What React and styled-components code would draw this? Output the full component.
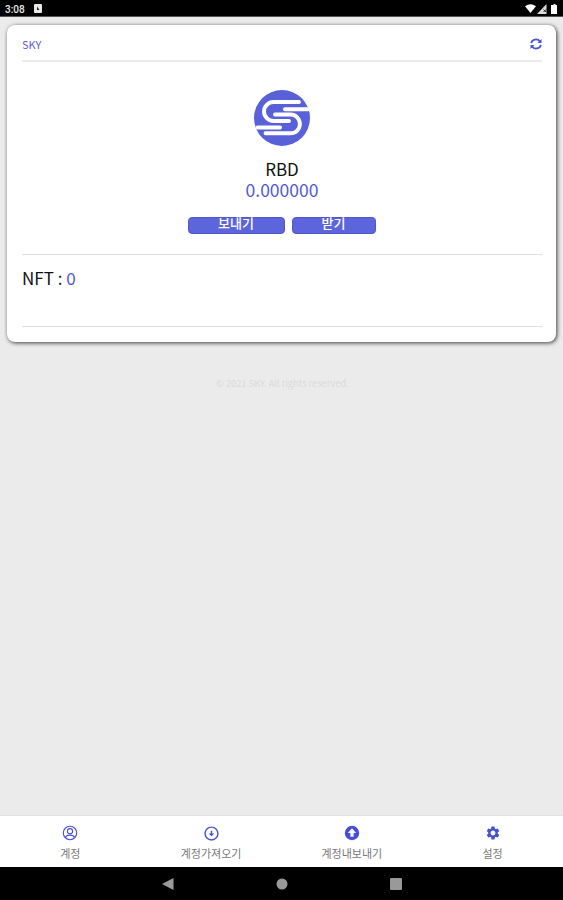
import React from 'react';
import styled, { createGlobalStyle } from 'styled-components';
import { MdOutlineArrowCircleDown, MdSettings } from 'react-icons/md';

const GlobalStyle = createGlobalStyle`
  * {
    box-sizing: border-box;
  }
  body {
    margin: 0;
    background: #ebebeb;
    font-family: 'Noto Sans CJK KR', 'Noto Sans', sans-serif;
  }
`;

const Screen = styled.div`
  display: flex;
  flex-direction: column;
  height: 900px;
  overflow: hidden;
`;

const StatusBar = styled.header`
  display: flex;
  align-items: center;
  justify-content: space-between;
  flex: none;
  height: 17px;
  padding: 1px 5px 0;
  background: #000;
  color: #e8e8e8;
  border-bottom: 1px solid #555;
`;

const StatusGroup = styled.div`
  display: flex;
  align-items: center;
  gap: ${props => props.gap}px;
`;

const Clock = styled.span`
  padding-top: 1px;
  font: 500 10px/13px Roboto, sans-serif;
`;

const Content = styled.main`
  flex: 1;
  padding: 8px 7px 0;
`;

const Card = styled.section`
  height: 317px;
  padding: 0 14px 0 15px;
  background: #fff;
  border-radius: 8px;
  box-shadow: 1px 1px 4px rgba(0, 0, 0, 0.75);
`;

const CardHeader = styled.div`
  display: flex;
  align-items: center;
  justify-content: space-between;
  height: 37px;
  padding-top: 3px;
  border-bottom: 2px solid #ececec;
  color: #5a60cf;
  font-size: 11px;
`;

const Wallet = styled.div`
  display: flex;
  flex-direction: column;
  align-items: center;
  height: 193px;
  padding-top: 28px;
  border-bottom: 1px solid #dedede;
`;

const TokenName = styled.div`
  margin-top: 12px;
  color: #111;
  font-size: 17px;
  line-height: 21px;
`;

const Balance = styled.div`
  color: #5059d6;
  font-size: 17.5px;
  line-height: 21px;
`;

const Buttons = styled.div`
  display: flex;
  gap: 7px;
  margin-top: 17px;
  padding-right: 1px;
`;

const Button = styled.button`
  display: flex;
  align-items: center;
  justify-content: center;
  width: ${props => props.width}px;
  height: 17px;
  padding: 0 0 5px;
  border: 1px solid #4f57cb;
  border-radius: 4px;
  background: #5c65dc;
  color: #fff;
  font: 500 13px/12px 'Noto Sans CJK KR', sans-serif;
`;

const Nft = styled.div`
  height: 72px;
  padding-top: 11px;
  border-bottom: 1px solid #dedede;
  color: #111;
  font-size: 17px;
  line-height: 24px;

  span {
    color: #5059d6;
  }
`;

const Copyright = styled.footer`
  margin-top: 34px;
  padding-left: 2px;
  color: #dadada;
  font-size: 9.3px;
  line-height: 14px;
  text-align: center;
`;

const TabBar = styled.nav`
  display: grid;
  grid-template-columns: repeat(4, 1fr);
  flex: none;
  height: 52px;
  border-top: 1px solid #e0e0e0;
  background: #fff;
`;

const Tab = styled.div`
  display: flex;
  flex-direction: column;
  align-items: center;
  padding-top: 9px;
  color: #4750d2;
`;

const TabLabel = styled.span`
  margin-top: 4px;
  color: #777;
  font-size: 11px;
  line-height: 16px;
`;

const SystemBar = styled.div`
  display: flex;
  align-items: center;
  justify-content: center;
  gap: 102px;
  flex: none;
  height: 33px;
  background: #000;
`;

const Logo = () => (
  <svg width="56" height="56" viewBox="0 0 56 56">
    <circle cx="28" cy="28" r="28" fill="#5961d9" />
    <g fill="none" stroke="#fff" strokeWidth="3.9" strokeLinecap="round">
      <path d="M45 12H19.500a9.500 9.500 0 0 0 0 19h15.500" />
      <path d="M54 19.300H31" />
      <path d="M21 24.500h15.500a9.400 9.400 0 0 1 0 18.800H11.500" />
      <path d="M3.500 37.500H26" />
    </g>
  </svg>
);

const RefreshIcon = () => (
  <svg width="12" height="12" viewBox="0 0 12 12">
    <g fill="none" stroke="#4b54cd" strokeWidth="1.8">
      <path d="M1.2 5.2a4.8 4.4 0 0 1 8.8-1.7" />
      <path d="M10.8 6.8A4.8 4.4 0 0 1 2 8.5" />
    </g>
    <path d="M11.5 1v4h-4zM.5 11V7h4z" fill="#4b54cd" />
  </svg>
);

const AccountIcon = () => (
  <svg width="16" height="16" viewBox="0 0 16 16" fill="none" stroke="currentColor" strokeWidth="1.1">
    <circle cx="8" cy="8" r="6.7" />
    <circle cx="8" cy="6.2" r="2.6" />
    <path d="M3.3 12.6c.7-1.8 2.3-2.5 4.7-2.5s4 .7 4.7 2.5" />
  </svg>
);

const ExportIcon = () => (
  <svg width="16" height="16" viewBox="0 0 16 16">
    <circle cx="8" cy="8" r="7.2" fill="currentColor" />
    <path d="M8 3.3 12.1 8H9.6v3.8H6.4V8H3.9z" fill="#fff" />
  </svg>
);

const ImportIcon = styled(MdOutlineArrowCircleDown)`
  margin: -0.5px;
`;

const tabs = [
  { label: '계정', icon: <AccountIcon /> },
  { label: '계정가져오기', icon: <ImportIcon size={17} /> },
  { label: '계정내보내기', icon: <ExportIcon /> },
  { label: '설정', icon: <MdSettings size={16} /> },
];

export default function App() {
  return (
    <Screen>
      <GlobalStyle />
      <StatusBar>
        <StatusGroup gap={9}>
          <Clock>3:08</Clock>
          <svg width="8" height="9" viewBox="0 0 8 9">
            <rect width="8" height="9" rx="1" fill="#e8e8e8" />
            <path d="M3 2.5 5.5 6H3z" fill="#222" />
          </svg>
        </StatusGroup>
        <StatusGroup gap={1}>
          <svg width="11" height="9" viewBox="0 0 11 9">
            <path d="M0 2.3Q5.500-2 11 2.300L5.500 9z" fill="#fff" />
          </svg>
          <svg width="10" height="10" viewBox="0 0 10 10">
            <path d="M9.500 0v10H0z" fill="#ddd" />
            <path d="M6.500 5.500 9 8M9 5.500 6.500 8" stroke="#222" />
          </svg>
          <svg width="10" height="10" viewBox="0 0 10 10">
            <path d="M4 1h1.500V0h2v1H9v9H3V1z" fill="#fff" />
          </svg>
        </StatusGroup>
      </StatusBar>
      <Content>
        <Card>
          <CardHeader>
            <span>SKY</span>
            <RefreshIcon />
          </CardHeader>
          <Wallet>
            <Logo />
            <TokenName>RBD</TokenName>
            <Balance>0.000000</Balance>
            <Buttons>
              <Button width={97}>보내기</Button>
              <Button width={84}>받기</Button>
            </Buttons>
          </Wallet>
          <Nft>
            NFT : <span>0</span>
          </Nft>
        </Card>
        <Copyright>© 2021 SKY. All rights reserved.</Copyright>
      </Content>
      <TabBar>
        {tabs.map(tab => (
          <Tab key={tab.label}>
            {tab.icon}
            <TabLabel>{tab.label}</TabLabel>
          </Tab>
        ))}
      </TabBar>
      <SystemBar>
        <svg width="12" height="12" viewBox="0 0 12 12">
          <path d="M11.500 0v12L0 6z" fill="#999" />
        </svg>
        <svg width="12" height="12" viewBox="0 0 12 12">
          <circle cx="6" cy="6" r="5.500" fill="#999" />
        </svg>
        <svg width="12" height="12" viewBox="0 0 12 12">
          <rect width="12" height="12" rx="1" fill="#999" />
        </svg>
      </SystemBar>
    </Screen>
  );
}
